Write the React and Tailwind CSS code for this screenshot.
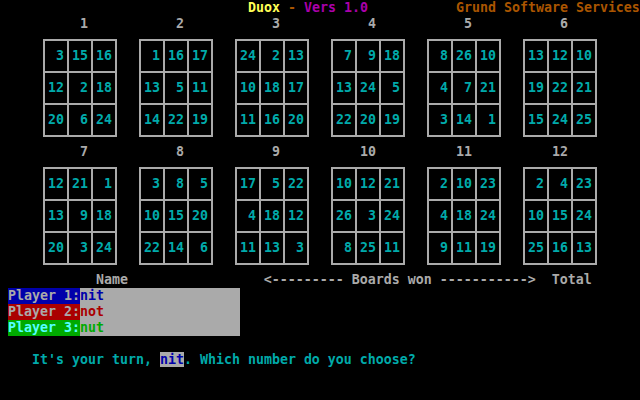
import React from 'react';

// VGA text-mode palette
const boards = [
  [[3, 15, 16], [12, 2, 18], [20, 6, 24]],
  [[1, 16, 17], [13, 5, 11], [14, 22, 19]],
  [[24, 2, 13], [10, 18, 17], [11, 16, 20]],
  [[7, 9, 18], [13, 24, 5], [22, 20, 19]],
  [[8, 26, 10], [4, 7, 21], [3, 14, 1]],
  [[13, 12, 10], [19, 22, 21], [15, 24, 25]],
  [[12, 21, 1], [13, 9, 18], [20, 3, 24]],
  [[3, 8, 5], [10, 15, 20], [22, 14, 6]],
  [[17, 5, 22], [4, 18, 12], [11, 13, 3]],
  [[10, 12, 21], [26, 3, 24], [8, 25, 11]],
  [[2, 10, 23], [4, 18, 24], [9, 11, 19]],
  [[2, 4, 23], [10, 15, 24], [25, 16, 13]],
];

const players = [
  { label: 'Player 1:', name: 'nit', bg: 'bg-[#0000aa]', fg: 'text-[#aaaaaa]', nameFg: 'text-[#0000aa]' },
  { label: 'Player 2:', name: 'not', bg: 'bg-[#aa0000]', fg: 'text-[#aaaaaa]', nameFg: 'text-[#aa0000]' },
  { label: 'Player 3:', name: 'nut', bg: 'bg-[#00aa00]', fg: 'text-[#55ffff]', nameFg: 'text-[#00aa00]' },
];

function Board({ index, cells }) {
  return (
    <div className="flex flex-col w-[74px]">
      <div className="h-[16px] flex">
        <span className="ml-[29px] w-[16px] text-right text-[#aaaaaa]">{index}</span>
      </div>
      <div className="mt-[7px] grid grid-cols-3 gap-[2px] p-[2px] bg-[#aaaaaa]">
        {cells.flat().map((n, i) => (
          <div key={i} className="w-[22px] h-[30px] bg-black pt-[7px] pl-[3px]">
            <div className="w-[16px] text-right text-[#00aaaa]">{n}</div>
          </div>
        ))}
      </div>
    </div>
  );
}

export default function App() {
  return (
    <div
      className="w-[640px] h-[400px] bg-black overflow-hidden text-[13.29px] leading-[16px] font-bold whitespace-pre"
      style={{ fontFamily: '"DejaVu Sans Mono", "Liberation Mono", monospace' }}
    >
      {/* Title line */}
      <div className="h-[16px] flex">
        <span className="ml-[248px] text-[#ffff55]">Duox</span>
        <span className="text-[#aa5500]"> - </span>
        <span className="text-[#aa00aa]">Vers 1.0</span>
        <span className="ml-[88px] text-[#aa5500]">Grund Software Services</span>
      </div>

      {/* Boards */}
      <div className="flex gap-[22px] pl-[43px]">
        {boards.slice(0, 6).map((b, i) => (
          <Board key={i} index={i + 1} cells={b} />
        ))}
      </div>
      <div className="mt-[7px] flex gap-[22px] pl-[43px]">
        {boards.slice(6).map((b, i) => (
          <Board key={i} index={i + 7} cells={b} />
        ))}
      </div>

      {/* Score header */}
      <div className="mt-[7px] h-[16px] text-[#aaaaaa]">
        {'            Name                 <--------- Boards won ----------->  Total'}
      </div>

      {/* Players */}
      {players.map((p) => (
        <div key={p.label} className="h-[16px] flex">
          <span className={`ml-[8px] w-[72px] ${p.bg} ${p.fg}`}>{p.label}</span>
          <span className={`w-[160px] bg-[#aaaaaa] ${p.nameFg}`}>{p.name}</span>
        </div>
      ))}

      {/* Prompt */}
      <div className="mt-[16px] h-[16px] text-[#00aaaa]">
        <span className="ml-[32px]">It's your turn, </span>
        <span className="bg-[#aaaaaa] text-[#0000aa]">nit</span>
        <span>. Which number do you choose?</span>
      </div>
    </div>
  );
}
